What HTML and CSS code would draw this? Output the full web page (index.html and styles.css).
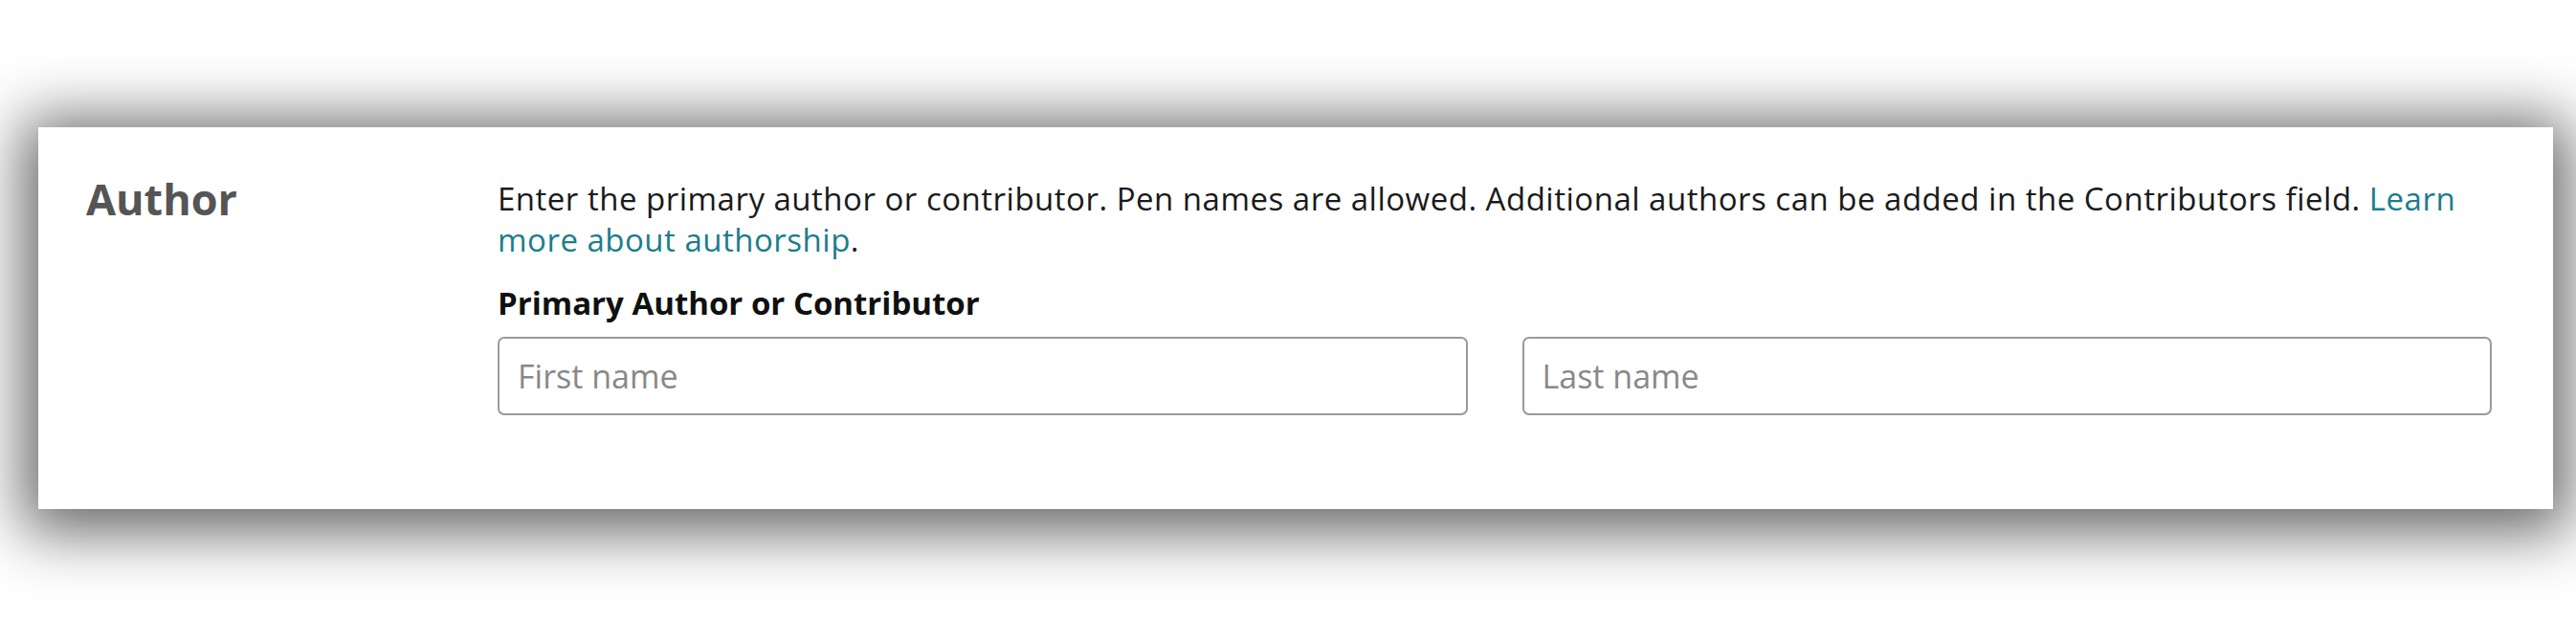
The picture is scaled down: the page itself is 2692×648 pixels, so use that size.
FILE: index.html
```html
<!DOCTYPE html>
<html lang="en">
<head>
<meta charset="utf-8">
<title>Author</title>
<link rel="stylesheet" href="styles.css">
</head>
<body>
<div class="page">
  <section class="card">
    <h2 class="section-title">Author</h2>
    <div class="section-body">
      <p class="help">Enter the primary author or contributor. Pen names are allowed. Additional authors can be added in the Contributors field. <a class="link" href="#">Learn more about authorship</a>.</p>
      <div class="field-label">Primary Author or Contributor</div>
      <div class="name-row">
        <input class="text-input" type="text" placeholder="First name">
        <input class="text-input" type="text" placeholder="Last name">
      </div>
    </div>
  </section>
</div>
</body>
</html>
```

FILE: styles.css
```css
html, body {
  margin: 0;
  padding: 0;
  background: #ffffff;
}

body {
  font-family: "Open Sans", "Noto Sans", Arial, sans-serif;
  color: #0f1111;
}

.page {
  box-sizing: border-box;
  min-height: 648px;
  padding: 133px 24px 0 40px;
}

.card {
  background: #ffffff;
  height: 399px;
  box-sizing: border-box;
  padding: 53px 64px 0 50px;
  display: grid;
  grid-template-columns: 430px 1fr;
  box-shadow: 0 8px 60px 16px rgba(0, 0, 0, 0.6);
}

.section-title {
  margin: 0;
  font-size: 45px;
  line-height: 43px;
  font-weight: 700;
  color: #555555;
}

.section-body {
  display: flex;
  flex-direction: column;
}

.help {
  margin: 0;
  font-size: 33px;
  letter-spacing: 0.5px;
  line-height: 43px;
  color: #1a1a1a;
}

.link {
  color: #1b7d8d;
  text-decoration: none;
}

.field-label {
  margin-top: 23px;
  font-size: 33px;
  line-height: 43px;
  font-weight: 700;
  color: #0f1111;
}

.name-row {
  margin-top: 14px;
  display: grid;
  grid-template-columns: 1fr 1fr;
  column-gap: 57px;
}

.text-input {
  box-sizing: border-box;
  height: 82px;
  width: 100%;
  border: 2px solid #9a9a9a;
  border-radius: 7px;
  padding: 0 19px;
  font-family: "Open Sans", "Noto Sans", Arial, sans-serif;
  font-size: 34px;
  color: #0f1111;
  background: #ffffff;
  outline: none;
}

.text-input::placeholder {
  color: #888888;
  opacity: 1;
}
```
